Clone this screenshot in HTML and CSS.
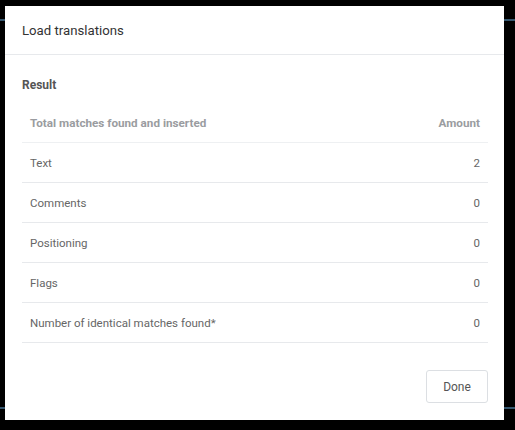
FILE: index.html
```html
<!DOCTYPE html>
<html>
<head>
<meta charset="utf-8">
<link rel="stylesheet" href="styles.css">
</head>
<body>
<div class="backdrop-line top"></div>
<div class="backdrop-line bottom"></div>
<div class="dialog">
  <div class="dialog-header">Load translations</div>
  <div class="dialog-body">
    <div class="section-title">Result</div>
    <div class="table">
      <div class="row head"><span>Total matches found and inserted</span><span>Amount</span></div>
      <div class="row"><span>Text</span><span>2</span></div>
      <div class="row"><span>Comments</span><span>0</span></div>
      <div class="row"><span>Positioning</span><span>0</span></div>
      <div class="row"><span>Flags</span><span>0</span></div>
      <div class="row"><span>Number of identical matches found*</span><span>0</span></div>
    </div>
  </div>
  <div class="dialog-footer"><button class="btn">Done</button></div>
</div>
</body>
</html>
```
FILE: styles.css
```css
html, body { margin: 0; padding: 0; }
body {
  background: #000;
  width: 515px;
  height: 430px;
  overflow: hidden;
  position: relative;
  font-family: Roboto, "Liberation Sans", sans-serif;
  padding-top: 6px;
  box-sizing: border-box;
}
.backdrop-line {
  position: absolute;
  left: 0;
  right: 0;
  height: 2px;
  background: #34566e;
}
.backdrop-line.top { top: 19px; }
.backdrop-line.bottom { top: 407px; }
.dialog {
  position: relative;
  margin-left: 5px;
  width: 499px;
  height: 414px;
  background: #fff;
  display: flex;
  flex-direction: column;
}
.dialog-header {
  height: 49px;
  box-sizing: border-box;
  padding: 0 17px;
  display: flex;
  align-items: center;
  font-size: 13.2px;
  color: #333;
  border-bottom: 1px solid #e7e9ec;
}
.dialog-body {
  padding: 22px 16px 0 17px;
}
.section-title {
  font-size: 12px;
  font-weight: 700;
  color: #555;
  line-height: 16px;
  margin-bottom: 10px;
}
.row {
  height: 40px;
  box-sizing: border-box;
  border-bottom: 1px solid #e7e9ec;
  display: flex;
  align-items: center;
  justify-content: space-between;
  padding: 0 8px;
  font-size: 11.5px;
  color: #666;
}
.row.head {
  font-size: 11.7px;
  font-weight: 700;
  color: #9a9ca0;
  border-bottom-color: #eef0f2;
}
.dialog-footer {
  display: flex;
  justify-content: flex-end;
  padding: 27px 16px 0 0;
}
.btn {
  width: 62px;
  height: 33px;
  background: #fff;
  border: 1px solid #dcdfe3;
  border-radius: 3px;
  font-family: Roboto, "Liberation Sans", sans-serif;
  font-size: 12px;
  color: #555;
  padding: 0;
}
```
